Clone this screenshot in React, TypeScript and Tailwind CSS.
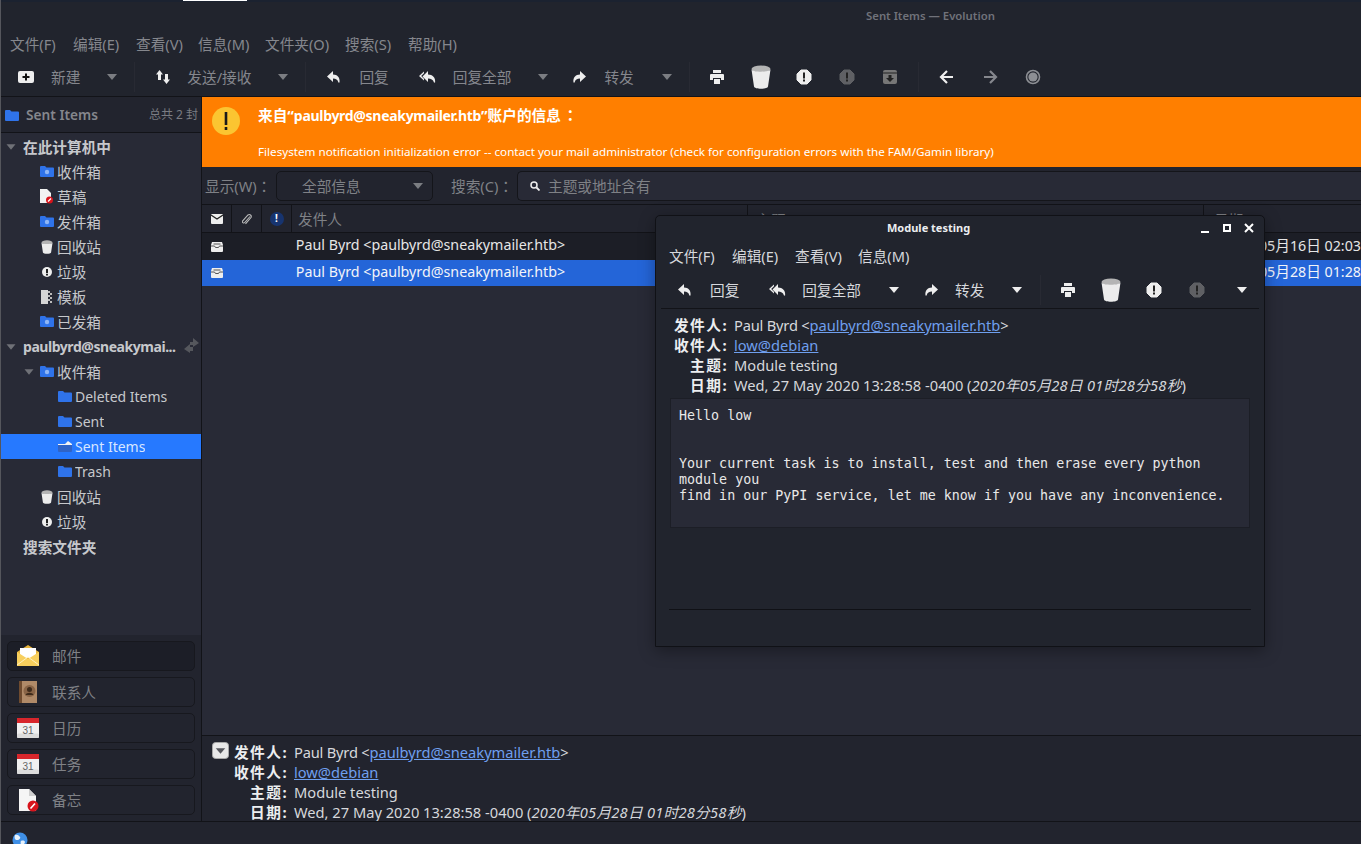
import React from "react";

const cjk = "font-['Noto_Sans','Noto_Sans_CJK_SC',sans-serif]";

function Caret({ className = "" }: { className?: string }) {
  return (
    <svg width="12" height="8" viewBox="0 0 12 8" className={className}>
      <path d="M1 1h10L6 7z" fill="currentColor" />
    </svg>
  );
}

function NewIcon() {
  return (
    <svg width="16" height="16" viewBox="0 0 16 16">
      <rect x="0" y="2" width="16" height="12" rx="2" fill="#eee" />
      <path d="M7 4.500h2V7h2.500v2H9v2.500H7V9H4.500V7H7z" fill="#111" />
    </svg>
  );
}

function SendIcon() {
  return (
    <svg width="16" height="16" viewBox="0 0 16 16" fill="#eee">
      <path d="M4.500 1 8 5.500H6V11H3V5.500H1z" />
      <path d="M11.500 15 8 10.500h2V5h3v5.500h2z" />
    </svg>
  );
}

function ReplyIcon() {
  return (
    <svg width="16" height="16" viewBox="0 0 16 16">
      <path d="M7 2 1 7.500 7 13V9.500c3 0 4.600 1 5.400 4 .4.200.8.200 1.100 0C14.200 8.500 11.500 5.500 7 5.500z" fill="#eee" />
    </svg>
  );
}

function ReplyAllIcon() {
  return (
    <svg width="18" height="16" viewBox="0 0 18 16">
      <path d="M9 2 3.500 7.500 9 13V9.500c3 0 5 1 6 4 .4.200.8.200 1.100 0C16.800 8.500 13.500 5.500 9 5.500z" fill="#eee" />
      <path d="M5 2.500 0 7l5 4.500V9.800L2.200 7 5 4.200z" fill="#eee" />
    </svg>
  );
}

function ForwardIcon() {
  return (
    <svg width="16" height="16" viewBox="0 0 16 16">
      <path d="M9 2l6 5.500L9 13V9.500c-3 0-4.600 1-5.400 4-.4.200-.8.200-1.100 0C1.800 8.500 4.500 5.500 9 5.500z" fill="#eee" />
    </svg>
  );
}

function PrintIcon() {
  return (
    <svg width="16" height="16" viewBox="0 0 16 16" fill="#eee">
      <path d="M4 1h8v3H4zM2 5h12a1 1 0 0 1 1 1v5h-3V9H4v2H1V6a1 1 0 0 1 1-1zM5 10h6v5H5z" />
    </svg>
  );
}

function TrashIcon({ w = 20, h = 24 }: { w?: number; h?: number }) {
  return (
    <svg width={w} height={h} viewBox="0 0 20 24">
      <ellipse cx="10" cy="4" rx="9.500" ry="3.500" fill="#b4b4b4" />
      <path d="M.5 4.500c2 3 17 3 19 0L17 21.500c-.4 3-13.600 3-14 0z" fill="#ececec" />
    </svg>
  );
}

function AlertIcon({ color = "#eee", mark = "#222" }: { color?: string; mark?: string }) {
  return (
    <svg width="16" height="16" viewBox="0 0 16 16">
      <path d="M5 1h6l4 4v6l-4 4H5l-4-4V5z" fill={color} stroke={color} strokeWidth="1" strokeLinejoin="round" />
      <path d="M7 3.500h2v6H7zM7 10.500h2v2H7z" fill={mark} />
    </svg>
  );
}

function ArchiveIcon() {
  return (
    <svg width="16" height="16" viewBox="0 0 16 16">
      <rect x="1" y="1" width="14" height="14" rx="2" fill="#777" />
      <path d="M1 4h14" stroke="#222" strokeWidth="1" />
      <path d="M6.500 6h3v3H12l-4 4-4-4h2.500z" fill="#222" />
    </svg>
  );
}

function ArrowIcon({ flip = false, color = "#eee" }: { flip?: boolean; color?: string }) {
  return (
    <svg width="16" height="16" viewBox="0 0 16 16" className={flip ? "-scale-x-100" : ""}>
      <path d="M8 2 2 8l6 6M2.500 8H14" stroke={color} strokeWidth="2.200" fill="none" />
    </svg>
  );
}

function StopIcon() {
  return (
    <svg width="16" height="16" viewBox="0 0 16 16">
      <circle cx="8" cy="8" r="6.500" stroke="#8d8f94" strokeWidth="1.600" fill="none" />
      <circle cx="8" cy="8" r="4.600" fill="#8d8f94" />
    </svg>
  );
}

function Folder({ dot = false }: { dot?: boolean }) {
  return (
    <svg width="14" height="11" viewBox="0 0 14 11">
      <path d="M0 1a1 1 0 0 1 1-1h4l1.500 1.500H13a1 1 0 0 1 1 1V10a1 1 0 0 1-1 1H1a1 1 0 0 1-1-1z" fill="#2f73ea" />
      {dot && <circle cx="7" cy="6" r="2.200" fill="#8fb6f5" />}
    </svg>
  );
}

function OpenFolder() {
  return (
    <svg width="14" height="11" viewBox="0 0 14 11">
      <path d="M0 4h14v6a1 1 0 0 1-1 1H1a1 1 0 0 1-1-1z" fill="#2f63c6" />
      <path d="M0 3h7l3-3 4 3v1H0z" fill="#f2f2f2" />
    </svg>
  );
}

function DocBadge() {
  return (
    <svg width="13" height="15" viewBox="0 0 13 15">
      <path d="M0 0h7l4 4v10H0z" fill="#f2f2f2" />
      <circle cx="9.500" cy="11" r="3.500" fill="#d8141c" />
      <path d="M8 12.500l3-3" stroke="#fff" strokeWidth="1.200" />
    </svg>
  );
}

function DocTemplate() {
  return (
    <svg width="11" height="14" viewBox="0 0 11 14">
      <path d="M0 0h7v14H0z" fill="#d5d5d5" />
      <path d="M7 1h2v2H7zM9 3h2v2H9zM7 5h2v2H7zM9 7h2v2H9zM7 9h2v2H7zM9 11h2v2H9z" fill="#bbb" />
    </svg>
  );
}

function SmallAlert() {
  return (
    <svg width="10" height="10" viewBox="0 0 10 10">
      <circle cx="5" cy="5" r="5" fill="#eee" />
      <path d="M4 2h2v4H4zM4 6.800h2v1.600H4z" fill="#222" />
    </svg>
  );
}

function ReadMail() {
  return (
    <svg width="12" height="12" viewBox="0 0 12 12">
      <path d="M1 1h10l1 3v6a1 1 0 0 1-1 1H1a1 1 0 0 1-1-1V4z" fill="#eee" />
      <path d="M2.500 3h7M0 5h3.500l1 1.500h3L8.500 5H12" stroke="#555" strokeWidth="1" fill="none" />
    </svg>
  );
}

function MailHeaderIcon() {
  return (
    <svg width="12" height="10" viewBox="0 0 12 10">
      <rect width="12" height="10" rx="1" fill="#eee" />
      <path d="M0 1l6 4 6-4" stroke="#222" strokeWidth="1.300" fill="none" />
    </svg>
  );
}

function ClipIcon() {
  return (
    <svg width="10" height="12" viewBox="0 0 10 12">
      <path d="M8.500 3 3.200 9a1.300 1.300 0 0 1-2-1.700L6.500 1.500a2 2 0 0 1 3 2.500L4 10.300" stroke="#bbb" strokeWidth="1.100" fill="none" transform="translate(-.5 .5)" />
    </svg>
  );
}

function MailLarge() {
  return (
    <svg width="22" height="22" viewBox="0 0 22 22">
      <path d="M0 7 11 0l11 7v13H0z" fill="#e8b53c" />
      <path d="M3 3h16v10H3z" fill="#fff" />
      <path d="M0 7l11 7 11-7v14H0z" fill="#f7cf5e" />
      <path d="M0 20l11-8 11 8" stroke="#fff1bd" strokeWidth="1" fill="none" />
    </svg>
  );
}

function ContactsLarge() {
  return (
    <svg width="18" height="22" viewBox="0 0 18 22">
      <rect width="18" height="22" fill="#b08a68" />
      <rect width="3" height="22" fill="#6f4b2f" />
      <circle cx="10.500" cy="10" r="6" fill="#8a6547" />
      <circle cx="10.500" cy="8.500" r="2.500" fill="#3f2b1b" />
      <path d="M6.500 14c1-3 7-3 8 0z" fill="#3f2b1b" />
    </svg>
  );
}

function CalendarLarge() {
  return (
    <svg width="22" height="21" viewBox="0 0 22 21">
      <rect width="22" height="20" rx="1.500" fill="#f0f0f0" />
      <rect width="22" height="5" fill="#d8262c" />
      <rect y="15.500" width="22" height="4.500" rx="1.500" fill="#dcdcdc" />
      <text x="11" y="15.500" textAnchor="middle" fontSize="10" fill="#666" fontFamily="Liberation Sans">31</text>
    </svg>
  );
}

function MemoLarge() {
  return (
    <svg width="22" height="24" viewBox="0 0 22 24">
      <path d="M2 1h10l7 7v15H2z" fill="#f5f5f5" />
      <path d="M12 1l7 7h-7z" fill="#cfcfcf" />
      <circle cx="16" cy="18" r="5.500" fill="#d8141c" />
      <path d="M13.500 20.500l4.500-5" stroke="#fff" strokeWidth="1.600" />
    </svg>
  );
}

function WarnIcon() {
  return (
    <svg width="28" height="28" viewBox="0 0 28 28">
      <circle cx="14" cy="14" r="14" fill="#fbc531" />
      <path d="M12.700 5h2.600v13h-2.600zM12.700 20h2.600v3h-2.600z" fill="#1a1a1a" />
    </svg>
  );
}

function TreeRow({
  label,
  icon,
  indent,
  bold,
  selected,
  caret,
  trailing,
  latin,
}: {
  label: string;
  icon?: React.ReactNode;
  indent: string;
  bold?: boolean;
  selected?: boolean;
  caret?: string;
  trailing?: React.ReactNode;
  latin?: boolean;
}) {
  return (
    <div className={`relative h-[25px] flex items-center ${latin ? "text-[14px]" : "text-[14.670px]"} ${latin && bold ? "tracking-[-0.450px]" : ""} ${selected ? "bg-[#2679ff] text-[#d8e6ff]" : "text-[#c6c8cc]"} ${bold ? "font-bold" : ""} ${indent}`}>
      {caret && (
        <Caret className={`absolute top-[9px] scale-90 text-[#6f7177] ${caret}`} />
      )}
      {icon && <span className="w-[17px] flex justify-center mr-[2px] shrink-0">{icon}</span>}
      <span className="truncate">{label}</span>
      {trailing}
    </div>
  );
}

function SwitchBtn({ label, icon, active }: { label: string; icon: React.ReactNode; active?: boolean }) {
  return (
    <div className={`h-[30px] rounded-[5px] border border-[#17181e] flex items-center ${active ? "bg-[#1c1e27]" : "bg-[#22242e]"}`}>
      <span className="w-[40px] flex justify-center shrink-0 mr-[4px]">{icon}</span>
      <span className="text-[14.670px] text-[#7f8186]">{label}</span>
    </div>
  );
}

function MailHeaders({ labelW }: { labelW: string }) {
  const rows: [string, React.ReactNode][] = [
    ["发件人", <><span className="tracking-[-0.200px]">Paul Byrd &lt;</span><a className="text-[#6f9fee] underline">paulbyrd@sneakymailer.htb</a>&gt;</>],
    ["收件人", <a className="text-[#6f9fee] underline">low@debian</a>],
    ["主题", "Module testing"],
    ["日期", <>Wed, 27 May 2020 13:28:58 -0400 (<i className="tracking-[0.250px]">2020年05月28日 01时28分58秒</i>)</>],
  ];
  return (
    <div className="flex flex-col">
      {rows.map(([k, v]) => (
        <div key={k} className="h-[20px] flex items-center text-[14.670px] text-[#d6d8dc] whitespace-nowrap">
          <span className={`${labelW} text-right font-bold text-[#eceef0] shrink-0 mr-[6px] tracking-[1.500px]`}>{k}:</span>
          <span>{v}</span>
        </div>
      ))}
    </div>
  );
}

const fullColon = "font-['Noto_Sans_CJK_TC',sans-serif]";

const mainMenu: [string, string][] = [
  ["文件(F)", "w-[63px]"],
  ["编辑(E)", "w-[63px]"],
  ["查看(V)", "w-[62px]"],
  ["信息(M)", "w-[67px]"],
  ["文件夹(O)", "w-[80px]"],
  ["搜索(S)", "w-[63px]"],
  ["帮助(H)", "w-[63px]"],
];

export default function App() {
  return (
    <div className={`relative w-[1361px] h-[844px] overflow-hidden bg-[#22242e] text-[#c6c8cc] flex flex-col border-l border-l-[#55565c] ${cjk}`}>
      {/* desktop panel strip */}
      <div className="h-[2px] bg-[#1b2230] shrink-0 flex">
        <div className="ml-[182px] w-[64px] h-[1px] bg-white" />
      </div>

      {/* title */}
      <div className="h-[27px] shrink-0 bg-[#21242d] flex items-center pt-[1px] text-[11.350px] font-semibold text-[#70727a]">
        <span className="ml-[865px]">Sent Items — Evolution</span>
      </div>

      {/* menu */}
      <div className="h-[30px] shrink-0 bg-[#21242d] flex items-center pl-[9px] text-[14.670px] text-[#85878d]">
        {mainMenu.map(([m, w]) => (
          <span key={m} className={`${w} whitespace-nowrap`}>{m}</span>
        ))}
      </div>

      {/* toolbar */}
      <div className="h-[38px] shrink-0 bg-[#21242d] border-b border-b-[#121318] flex items-center pb-[1px] text-[14.670px] text-[#85878d]">
        <span className="ml-[17px]"><NewIcon /></span>
        <span className="ml-[17px]">新建</span>
        <Caret className="ml-[26px] text-[#7b7d82]" />
        <span className="ml-[16px] h-[30px] border-l border-l-[#282a33]" />
        <span className="ml-[20px]"><SendIcon /></span>
        <span className="ml-[16px]">发送/接收</span>
        <Caret className="ml-[26px] text-[#7b7d82]" />
        <span className="ml-[16px] h-[30px] border-l border-l-[#282a33]" />
        <span className="ml-[20px]"><ReplyIcon /></span>
        <span className="ml-[17px]">回复</span>
        <span className="ml-[30px]"><ReplyAllIcon /></span>
        <span className="ml-[16px]">回复全部</span>
        <Caret className="ml-[26px] text-[#7b7d82]" />
        <span className="ml-[22px]"><ForwardIcon /></span>
        <span className="ml-[17px]">转发</span>
        <Caret className="ml-[27px] text-[#7b7d82]" />
        <span className="ml-[16px] h-[30px] border-l border-l-[#282a33]" />
        <span className="ml-[19px]"><PrintIcon /></span>
        <span className="ml-[26px]"><TrashIcon /></span>
        <span className="ml-[25px]"><AlertIcon /></span>
        <span className="ml-[27px]"><AlertIcon color="#5f6064" /></span>
        <span className="ml-[27px]"><ArchiveIcon /></span>
        <span className="ml-[20px] h-[30px] border-l border-l-[#282a33]" />
        <span className="ml-[20px]"><ArrowIcon /></span>
        <span className="ml-[27px]"><ArrowIcon flip color="#85878d" /></span>
        <span className="ml-[27px]"><StopIcon /></span>
      </div>

      <div className="flex flex-1 min-h-0">
        {/* sidebar */}
        <div className="w-[201px] shrink-0 flex flex-col border-r border-r-[#121318]">
          <div className="h-[36px] shrink-0 bg-[#22242e] border-b border-b-[#121318] flex items-center pl-[4px] pr-[3px] pt-[1px]">
            <Folder />
            <span className="ml-[7px] text-[13.700px] font-semibold text-[#85878d]">Sent Items</span>
            <span className="ml-auto text-[12px] text-[#7a7c82]">总共 2 封</span>
          </div>
          <div className="flex-1 bg-[#282a36] pt-[1px] min-h-0">
            <TreeRow label="在此计算机中" indent="pl-[22px]" bold caret="left-[4px]" />
            <TreeRow label="收件箱" indent="pl-[37px]" icon={<Folder dot />} />
            <TreeRow label="草稿" indent="pl-[37px]" icon={<DocBadge />} />
            <TreeRow label="发件箱" indent="pl-[37px]" icon={<Folder dot />} />
            <TreeRow label="回收站" indent="pl-[37px]" icon={<TrashIcon w={12} h={14} />} />
            <TreeRow label="垃圾" indent="pl-[37px]" icon={<SmallAlert />} />
            <TreeRow label="模板" indent="pl-[37px]" icon={<DocTemplate />} />
            <TreeRow label="已发箱" indent="pl-[37px]" icon={<Folder dot />} />
            <TreeRow
              label="paulbyrd@sneakymai..."
              indent="pl-[22px]"
              bold
              latin
              caret="left-[4px]"
              trailing={
                <svg width="15" height="15" viewBox="0 0 15 15" className="absolute right-[2px] top-[4px]">
                  <path d="M9 0l6 5-6 4V7H6V4h3zM6 6l-6 5 6 4v-2h3V9H6z" fill="#55575d" />
                </svg>
              }
            />
            <TreeRow label="收件箱" indent="pl-[37px]" icon={<Folder dot />} caret="left-[22px]" />
            <TreeRow label="Deleted Items" indent="pl-[55px]" latin icon={<Folder />} />
            <TreeRow label="Sent" indent="pl-[55px]" latin icon={<Folder />} />
            <TreeRow label="Sent Items" indent="pl-[55px]" latin icon={<OpenFolder />} selected />
            <TreeRow label="Trash" indent="pl-[55px]" latin icon={<Folder />} />
            <TreeRow label="回收站" indent="pl-[37px]" icon={<TrashIcon w={12} h={14} />} />
            <TreeRow label="垃圾" indent="pl-[37px]" icon={<SmallAlert />} />
            <TreeRow label="搜索文件夹" indent="pl-[22px]" bold />
          </div>
          <div className="h-[186px] shrink-0 bg-[#22242e] px-[6px] pt-[6px] flex flex-col gap-[6px]">
            <SwitchBtn label="邮件" icon={<MailLarge />} active />
            <SwitchBtn label="联系人" icon={<ContactsLarge />} />
            <SwitchBtn label="日历" icon={<CalendarLarge />} />
            <SwitchBtn label="任务" icon={<CalendarLarge />} />
            <SwitchBtn label="备忘" icon={<MemoLarge />} />
          </div>
        </div>

        {/* main column */}
        <div className="flex-1 min-w-0 flex flex-col">
          <div className="h-[70px] shrink-0 bg-[#ff7f00] flex text-white">
            <div className="pl-[10px] pt-[10px]"><WarnIcon /></div>
            <div className="ml-[18px]">
              <div className="mt-[8px] h-[20px] flex items-center font-bold whitespace-pre">
                <span className="text-[14.670px]">来自“</span>
                <span className="text-[14px] tracking-[-0.300px]">paulbyrd@sneakymailer.htb</span>
                <span className="text-[14.670px]">”账户的信息</span>
                <span className={`ml-[2px] text-[14.670px] ${fullColon}`}>：</span>
              </div>
              <div className="mt-[19px] h-[16px] flex items-center text-[11.670px]">Filesystem notification initialization error -- contact your mail administrator (check for configuration errors with the FAM/Gamin library)</div>
            </div>
          </div>

          <div className="h-[38px] shrink-0 bg-[#22242e] border-b border-b-[#121318] flex items-center text-[14.670px] text-[#7f8186]">
            <span className="ml-[3px] w-[71px] whitespace-nowrap">显示(W)<span className={fullColon}>：</span></span>
            <div className="w-[157px] h-[30px] rounded-[5px] border border-[#14151a] bg-[#22242e] flex items-center pl-[25px] pr-[8px]">
              <span>全部信息</span>
              <Caret className="ml-auto text-[#7b7d82]" />
            </div>
            <span className="ml-[18px] w-[66px] whitespace-nowrap">搜索(C)<span className={fullColon}>：</span></span>
            <div className="flex-1 h-[30px] rounded-l-[5px] border border-r-0 border-[#14151a] bg-[#282a36] flex items-center pl-[12px]">
              <svg width="10" height="10" viewBox="0 0 10 10">
                <circle cx="4" cy="4" r="3" stroke="#eee" strokeWidth="1.500" fill="none" />
                <path d="M6.500 6.500 9.500 9.500" stroke="#eee" strokeWidth="1.800" />
              </svg>
              <span className="ml-[8px]">主题或地址含有</span>
            </div>
          </div>

          <div className="h-[28px] shrink-0 bg-[#22242e] border-b border-b-[#121318] flex text-[14.670px] text-[#7f8186]">
            <span className="w-[30px] border-r border-r-[#121318] flex items-center justify-center"><MailHeaderIcon /></span>
            <span className="w-[30px] border-r border-r-[#121318] flex items-center justify-center"><ClipIcon /></span>
            <span className="w-[30px] border-r border-r-[#121318] flex items-center justify-center">
              <span className="w-[14px] h-[14px] rounded-full bg-[#17346f] text-white text-[10px] font-bold flex items-center justify-center">!</span>
            </span>
            <span className="w-[456px] border-r border-r-[#121318] flex items-center pl-[6px]">发件人</span>
            <span className="w-[456px] border-r border-r-[#121318] flex items-center pl-[8px] pt-[3px]">主题</span>
            <span className="flex-1 flex items-center pl-[10px] pt-[3px]">日期</span>
          </div>

          <div className="flex-1 min-h-0 bg-[#282a36]">
            <div className="h-[27px] bg-[#1c1e26] flex items-center text-[14.250px] text-[#e6e6e6] whitespace-nowrap">
              <span className="w-[30px] flex justify-center"><ReadMail /></span>
              <span className="ml-[64px] w-[921px] pb-[3px]">Paul Byrd &lt;paulbyrd@sneakymailer.htb&gt;</span>
              <span className="pb-[3px]">2020<span className="text-[14.670px]">年</span>05<span className="text-[14.670px]">月</span>16<span className="text-[14.670px]">日</span> 02:03</span>
            </div>
            <div className="h-[26px] bg-[#2465d8] flex items-center text-[14.250px] text-[#f2f4f8] whitespace-nowrap">
              <span className="w-[30px] flex justify-center"><ReadMail /></span>
              <span className="ml-[64px] w-[921px] pb-[3px]">Paul Byrd &lt;paulbyrd@sneakymailer.htb&gt;</span>
              <span className="pb-[3px]">2020<span className="text-[14.670px]">年</span>05<span className="text-[14.670px]">月</span>28<span className="text-[14.670px]">日</span> 01:28</span>
            </div>
          </div>

          <div className="h-[86px] shrink-0 bg-[#22242e] border-t border-t-[#121318] overflow-hidden pt-[6px] relative">
            <svg width="17" height="17" viewBox="0 0 18 18" className="absolute left-[10px] top-[6px]">
              <rect x="0.500" y="0.500" width="17" height="17" rx="3.500" fill="#e8e8e8" stroke="#aaa" />
              <path d="M4 6.500h10L9 12.500z" fill="#55565c" />
            </svg>
            <MailHeaders labelW="w-[86px]" />
          </div>
        </div>
      </div>

      {/* status bar */}
      <div className="h-[23px] shrink-0 bg-[#22242e] border-t border-t-[#121318] pl-[11px] pt-[10px]">
        <svg width="16" height="16" viewBox="0 0 16 16">
          <circle cx="8" cy="8" r="7.500" fill="#3f8fe6" />
          <path d="M3 3c3-1 4 1 5 2s-1 3-3 3-3-2-2-5zM9 9c2-1 4 0 4 1s-2 4-3 4-2-4-1-5z" fill="#e6f0fa" />
        </svg>
      </div>

      {/* message window */}
      <div className="absolute left-[654px] top-[215px] w-[610px] h-[432px] bg-[#21242d] border border-[#101116] rounded-t-[5px] shadow-[0_4px_16px_rgba(0,0,0,0.35)] flex flex-col text-[#d6d8dc]">
        <div className="h-[25px] shrink-0 flex items-center relative">
          <span className="ml-[231px] text-[11px] font-bold text-[#eceef0]">Module testing</span>
          <div className="absolute right-0 top-[5px] flex items-center">
            <svg width="14" height="14" viewBox="0 0 14 14" className="mr-[8px]"><path d="M3 10h8v2H3z" fill="#fff" /></svg>
            <svg width="14" height="14" viewBox="0 0 14 14" className="mr-[8px]"><path d="M3 3h8v8H3zM5 5v4h4V5z" fill="#fff" fillRule="evenodd" /></svg>
            <svg width="14" height="14" viewBox="0 0 14 14" className="mr-[8px]"><path d="M3 3l8 8M11 3l-8 8" stroke="#fff" strokeWidth="2" /></svg>
          </div>
        </div>
        <div className="h-[30px] shrink-0 flex items-center pl-[13px] text-[14.670px]">
          {["文件(F)", "编辑(E)", "查看(V)", "信息(M)"].map((m) => (
            <span key={m} className="w-[63px] whitespace-nowrap">{m}</span>
          ))}
        </div>
        <div className="h-[38px] shrink-0 mx-[5px] border-b border-b-[#121318] flex items-center text-[14.670px]">
          <span className="ml-[16px]"><ReplyIcon /></span>
          <span className="ml-[17px]">回复</span>
          <span className="ml-[30px]"><ReplyAllIcon /></span>
          <span className="ml-[15px]">回复全部</span>
          <Caret className="ml-[27px] text-[#eee]" />
          <span className="ml-[23px]"><ForwardIcon /></span>
          <span className="ml-[16px]">转发</span>
          <Caret className="ml-[27px] text-[#eee]" />
          <span className="ml-[17px] h-[30px] border-l border-l-[#282a33]" />
          <span className="ml-[19px]"><PrintIcon /></span>
          <span className="ml-[25px]"><TrashIcon /></span>
          <span className="ml-[25px]"><AlertIcon /></span>
          <span className="ml-[27px]"><AlertIcon color="#5f6064" /></span>
          <Caret className="ml-[31px] text-[#eee]" />
        </div>
        <div className="pt-[6px] shrink-0">
          <MailHeaders labelW="w-[72px]" />
        </div>
        <div className="mx-[14px] mt-[3px] h-[130px] shrink-0 bg-[#282a36] border border-[#1c1e26] px-[8px] pt-[9px] font-['DejaVu_Sans_Mono',monospace] text-[13.330px] leading-[16px] text-[#e8e8e8] whitespace-pre">
          {"Hello low\n\n\nYour current task is to install, test and then erase every python\nmodule you\nfind in our PyPI service, let me know if you have any inconvenience."}
        </div>
        <div className="mx-[13px] mt-[81px] border-b border-b-[#101116]" />
      </div>
    </div>
  );
}
